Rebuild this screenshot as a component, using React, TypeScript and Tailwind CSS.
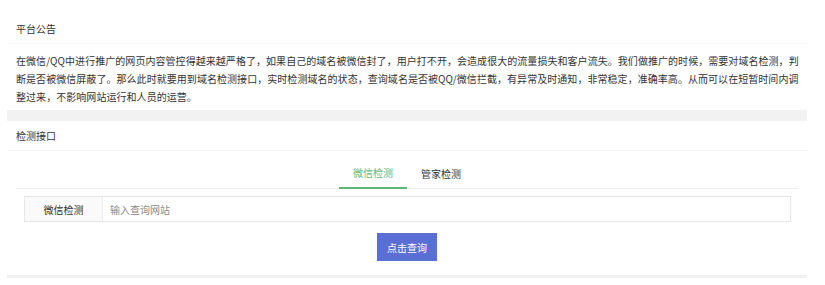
import React from "react"

const font = { fontFamily: '"Noto Sans CJK SC", "Noto Sans", sans-serif' }

const CardHeader = ({ title }: { title: string }) => (
  <div className="h-[30px] px-[9px] flex items-center text-[10px] text-[#333] border-b border-[#f6f6f6]">
    {title}
  </div>
)

const Notice = () => (
  <div className="bg-white">
    <CardHeader title="平台公告" />
    <div className="px-[9px] pt-[8px] pb-[4px] text-[10px] leading-[18px] text-[#333] whitespace-nowrap tracking-[0.05px]">
      在微信/QQ中进行推广的网页内容管控得越来越严格了，如果自己的域名被微信封了，用户打不开，会造成很大的流量损失和客户流失。我们做推广的时候，需要对域名检测，判
      <br />
      断是否被微信屏蔽了。那么此时就要用到域名检测接口，实时检测域名的状态，查询域名是否被QQ/微信拦截，有异常及时通知，非常稳定，准确率高。从而可以在短暂时间内调
      <br />
      整过来，不影响网站运行和人员的运营。
    </div>
  </div>
)

const Checker = () => (
  <div className="bg-white">
    <CardHeader title="检测接口" />
    <div className="px-[9px] pt-[7px]">
      <div className="h-[31px] flex justify-center border-b border-[#eeeeee] text-[10px]">
        <div className="w-[68px] h-[31px] -mb-px flex items-center justify-center text-[#5fb878] border-b-2 border-[#5fb878]">
          微信检测
        </div>
        <div className="w-[68px] h-[30px] flex items-center justify-center text-[#333]">
          管家检测
        </div>
      </div>
      <div className="mt-[7px] ml-[8px] mr-[7px] h-[26px] flex border border-[#e6e6e6] text-[10px]">
        <div className="w-[78px] shrink-0 bg-[#fafafa] border-r border-[#eeeeee] flex items-center justify-center text-[#333]">
          微信检测
        </div>
        <input
          className="flex-1 px-[7px] outline-none text-[#333] placeholder:text-[#8a8a8a] bg-white"
          placeholder="输入查询网站"
          style={font}
        />
      </div>
      <div className="flex justify-center mt-[11px]">
        <button className="w-[60px] h-[28px] bg-[#5a6fd4] text-white text-[10px]" style={font}>
          点击查询
        </button>
      </div>
    </div>
    <div className="mt-[14px] h-[3px] bg-[#f0f0f0]" />
  </div>
)

export default function App() {
  return (
    <div className="w-[825px] h-[285px] bg-white overflow-hidden" style={font}>
      <div className="ml-[7px] w-[800px] pt-[14px]">
        <Notice />
        <div className="h-[11px] bg-[#f2f2f2]" />
        <Checker />
      </div>
    </div>
  )
}
